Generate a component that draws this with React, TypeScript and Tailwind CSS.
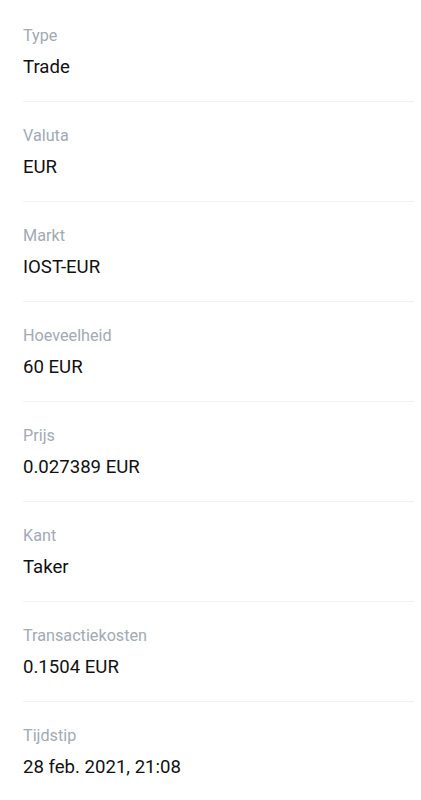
const rows = [
  { label: "Type", value: "Trade" },
  { label: "Valuta", value: "EUR" },
  { label: "Markt", value: "IOST-EUR" },
  { label: "Hoeveelheid", value: "60 EUR" },
  { label: "Prijs", value: "0.027389 EUR" },
  { label: "Kant", value: "Taker" },
  { label: "Transactiekosten", value: "0.1504 EUR" },
  { label: "Tijdstip", value: "28 feb. 2021, 21:08" },
];

export default function App() {
  return (
    <div className="min-h-[800px] w-full bg-white font-['Roboto',sans-serif]">
      <div className="pl-[23px] pr-[7px] pt-[2px]">
        {rows.map((row, i) => (
          <div
            key={row.label}
            className={`pt-[24px] pb-[21px] ${i < rows.length - 1 ? "border-b border-[#f0f1f3]" : ""}`}
          >
            <div className="text-[16.2px] leading-[20px] text-[#a2aab4]">{row.label}</div>
            <div className="mt-[9px] text-[18.6px] leading-[25px] text-[#111111]">{row.value}</div>
          </div>
        ))}
      </div>
    </div>
  );
}
